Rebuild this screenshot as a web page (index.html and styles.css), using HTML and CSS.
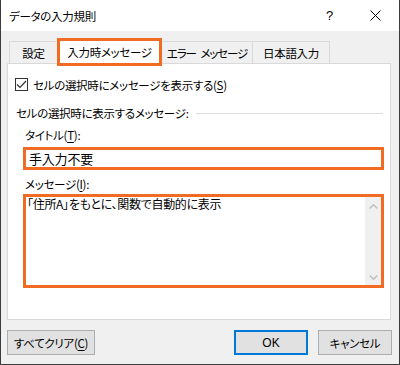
FILE: index.html
```html
<!DOCTYPE html>
<html>
<head>
	<title>データの入力規則</title>
	<link rel="stylesheet" href="styles.css">
</head>
<body>
<div class="window">
 <!--========== TITLE BAR =============-->
 <div class="title__bar">
  <span class="title__text">データの入力規則</span>
  <span class="title__help">?</span>
  <span class="title__close">
   <svg width="11" height="11" viewBox="0 0 11 11"><path d="M0.5 0.5L10.5 10.5M10.5 0.5L0.5 10.5" stroke="#000" stroke-width="1" fill="none"/></svg>
  </span>
 </div>

 <div class="dialog__body">
  <!--========== TABS =============-->
  <div class="tabs">
   <div class="tab tab__first">設定</div>
   <div class="tab tab__active">入力時メッセージ</div>
   <div class="tab tab__error">エラー メッセージ</div>
   <div class="tab tab__ime">日本語入力</div>
  </div>

  <!--========== TAB PANEL =============-->
  <div class="panel">
   <div class="check__row">
    <span class="check__box">
     <svg width="11" height="11" viewBox="0 0 11 11"><path d="M1 5.5L4 8.5L10 2" stroke="#333" stroke-width="1.2" fill="none"/></svg>
    </span>
    <span>セルの選択時にメッセージを表示する(<u>S</u>)</span>
   </div>

   <div class="group__label">
    <span>セルの選択時に表示するメッセージ:</span>
    <span class="group__line"></span>
   </div>

   <div class="field__label">タイトル(<u>T</u>):</div>
   <div class="title__input">手入力不要</div>

   <div class="field__label field__label--msg">メッセージ(<u>I</u>):</div>
   <div class="message__box">
    <div class="message__text">「住所A」をもとに、関数で自動的に表示</div>
    <div class="scroll__bar">
     <svg width="9" height="5" viewBox="0 0 9 5"><path d="M0.7 4.5L4.5 0.8L8.3 4.5" stroke="#bdbdbd" stroke-width="1.4" fill="none"/></svg>
     <svg width="9" height="5" viewBox="0 0 9 5"><path d="M0.7 0.5L4.5 4.2L8.3 0.5" stroke="#bdbdbd" stroke-width="1.4" fill="none"/></svg>
    </div>
   </div>
  </div>

  <!--========== BUTTONS =============-->
  <div class="button__row">
   <button class="btn btn__clear">すべてクリア(<u>C</u>)</button>
   <div class="button__group">
    <button class="btn btn__ok">OK</button>
    <button class="btn">キャンセル</button>
   </div>
  </div>
 </div>
</div>
</body>
</html>
```

FILE: styles.css
```css
     *{
     	margin: 0;
     	padding: 0;
     	box-sizing: border-box;
     }

     body{
     	background-color: #fff;
     	font-family: "Noto Sans CJK JP", "Noto Sans", sans-serif;
     	font-feature-settings: "palt";
     	font-size: 11.5px;
     	letter-spacing: -0.3px;
     	color: #000;
     }

     u{
     	text-underline-offset: 2px;
     }

     .window{
     	width: 400px;
     	height: 365px;
     	background-color: #f0f0f0;
     	border-left: 1px solid #3c3c3c;
     	border-right: 1px solid #3c3c3c;
     	border-bottom: 1px solid #3c3c3c;
     	display: flex;
     	flex-direction: column;
     }

     /*========= TITLE BAR =========*/
     .title__bar{
     	height: 31px;
     	background-color: #fff;
     	display: flex;
     	align-items: center;
     	padding-left: 8px;
     	line-height: 16px;
     }

     .title__text{
     	flex: 1;
     }

     .title__help{
     	font-family: "Liberation Sans", sans-serif;
     	font-size: 13px;
     	margin-right: 37px;
     }

     .title__close{
     	display: flex;
     	margin-right: 18px;
     }

     /*========= BODY =========*/
     .dialog__body{
     	padding: 0 6px;
     }

     .tabs{
     	display: flex;
     	align-items: flex-end;
     	margin-top: 10px;
     	padding-left: 2px;
     	height: 22px;
     }

     .tab{
     	height: 22px;
     	border: 1px solid #d9d9d9;
     	border-bottom: none;
     	display: flex;
     	align-items: center;
     	justify-content: center;
     	line-height: 16px;
     	padding-top: 1px;
     	white-space: nowrap;
     	flex-shrink: 0;
     }

     .tab__first{
     	width: 48px;
     	border-right: none;
     }

     .tab__active{
     	width: 105px;
     	height: 28px;
     	margin-top: -3px;
     	margin-bottom: -3px;
     	background-color: #fff;
     	border: 3px solid #f26b22;
     	position: relative;
     	z-index: 1;
     	padding-top: 0;
     }

     .tab__error{
     	width: 91px;
     	border-left: none;
     	letter-spacing: -1.1px;
     	word-spacing: 3px;
     }

     .tab__ime{
     	width: 77px;
     	border-left: none;
     }

     .panel{
     	width: 384px;
     	height: 257px;
     	background-color: #fff;
     	border: 1px solid #d9d9d9;
     	padding: 13px 0 0 7px;
     	line-height: 16px;
     }

     .check__row{
     	display: flex;
     	align-items: center;
     	gap: 5px;
     	height: 13px;
     	margin-top: 1px;
     }

     .check__box{
     	width: 13px;
     	height: 13px;
     	border: 1px solid #333;
     	display: flex;
     	align-items: center;
     	justify-content: center;
     }

     .group__label{
     	display: flex;
     	align-items: center;
     	margin-top: 14px;
     	margin-left: 1px;
     	width: 367px;
     }

     .group__line{
     	flex: 1;
     	height: 1px;
     	background-color: #dcdcdc;
     	margin-left: 7px;
     }

     .field__label{
     	margin-top: 6px;
     	margin-left: 10px;
     }

     .field__label--msg{
     	margin-top: 6px;
     }

     .title__input{
     	margin-top: 4px;
     	margin-left: 8px;
     	width: 361px;
     	height: 23px;
     	border: 3px solid #f26b22;
     	padding-left: 3px;
     	font-size: 13px;
     	letter-spacing: -0.2px;
     	line-height: 17px;
     }

     .message__box{
     	margin-top: 2px;
     	margin-left: 8px;
     	width: 361px;
     	height: 94px;
     	border: 3px solid #f26b22;
     	display: flex;
     }

     .message__text{
     	flex: 1;
     	padding-left: 1px;
     	line-height: 13px;
     	font-size: 12px;
     	letter-spacing: -0.3px;
     }

     .scroll__bar{
     	width: 16px;
     	background-color: #f0f0f0;
     	display: flex;
     	flex-direction: column;
     	justify-content: space-between;
     	align-items: center;
     	padding: 7px 0 5px;
     }

     /*========= BUTTONS =========*/
     .button__row{
     	display: flex;
     	justify-content: space-between;
     	margin-top: 10px;
     	width: 385px;
     }

     .button__group{
     	display: flex;
     	gap: 10px;
     }

     .btn{
     	width: 74px;
     	height: 25px;
     	background-color: #e1e1e1;
     	border: 1px solid #adadad;
     	font-family: "Noto Sans CJK JP", "Noto Sans", sans-serif;
     	font-feature-settings: "palt";
     	font-size: 11.5px;
     	letter-spacing: -0.3px;
     	color: #000;
     	line-height: 16px;
     }

     .btn__clear{
     	width: 88px;
     }

     .btn__ok{
     	border: 2px solid #0078d7;
     	font-family: "Liberation Sans", sans-serif;
     	font-size: 12px;
     	letter-spacing: 0;
     }
```
